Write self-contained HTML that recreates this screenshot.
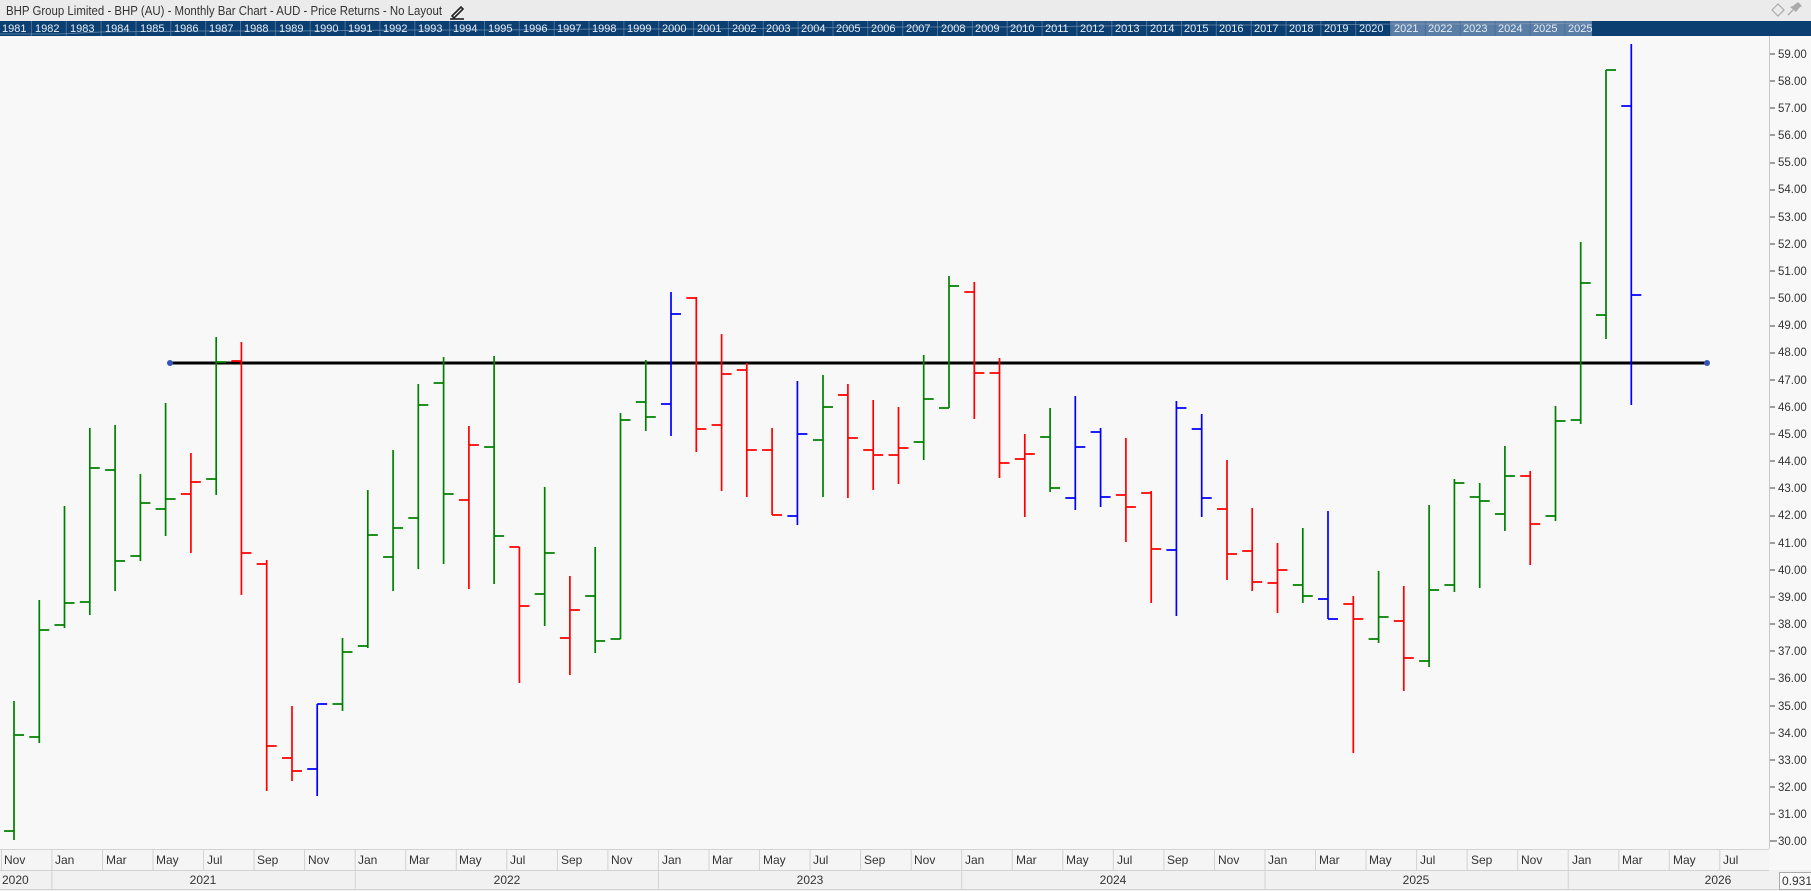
<!DOCTYPE html>
<html><head><meta charset="utf-8"><style>
html,body{margin:0;padding:0;background:#f8f8f8;overflow:hidden}
svg{display:block}
text{font-family:"Liberation Sans",sans-serif}
</style></head><body>
<svg width="1811" height="891" viewBox="0 0 1811 891" xmlns="http://www.w3.org/2000/svg">
<rect x="0" y="0" width="1811" height="891" fill="#f8f8f8"/>
<!-- title bar -->
<rect x="0" y="0" width="1811" height="21" fill="#ebebeb"/>
<text x="6" y="15" font-size="13" fill="#333" textLength="436" lengthAdjust="spacingAndGlyphs">BHP Group Limited - BHP (AU) - Monthly Bar Chart - AUD - Price Returns - No Layout</text>
<g stroke="#222" stroke-width="1.6" fill="none"><path d="M452 16 L461 7 L463 9 L454 18 Z"/><path d="M450 19 H464"/></g>
<path d="M1772 10 L1778 4 L1784 10 L1778 16 Z" fill="none" stroke="#aaa" stroke-width="1.2"/>
<g fill="#aaa"><path d="M1793 6 L1798 2 L1802 6 L1799 8 L1796 12 L1790 7 Z"/><path d="M1793 10 L1788 15" stroke="#aaa" stroke-width="1.3"/></g>
<!-- year strip -->
<rect x="0" y="21" width="1811" height="15" fill="#0b3f72"/>
<rect x="1390" y="21" width="202" height="15" fill="#5a7ea5"/>
<g stroke="#4c6f95" stroke-width="1">
<path d="M31.4 21V36M66.3 21V36M101.1 21V36M136 21V36M170.8 21V36M205.7 21V36M240.5 21V36M275.4 21V36M310.2 21V36M345.1 21V36M379.9 21V36M414.8 21V36M449.6 21V36M484.5 21V36M519.3 21V36M554.2 21V36M589 21V36M623.9 21V36M658.7 21V36M693.6 21V36M728.4 21V36M763.3 21V36M798.1 21V36M833 21V36M867.8 21V36M902.7 21V36M937.5 21V36M972.4 21V36M1007.2 21V36M1042.1 21V36M1076.9 21V36M1111.8 21V36M1146.6 21V36M1181.5 21V36M1216.3 21V36M1251.2 21V36M1286 21V36M1320.9 21V36M1355.7 21V36M1390.6 21V36M1425.4 21V36M1460.3 21V36M1495.1 21V36M1530 21V36M1564.8 21V36"/>
</g>
<polyline points="0,34 60,34 100,32 200,31 300,31 400,30 500,30 600,29 700,29 800,28 900,27 1000,27 1100,26 1200,25 1300,25 1400,24 1500,24 1590,23" fill="none" stroke="#8fa6c0" stroke-width="0.8" opacity="0.7"/>
<g font-size="11" fill="#e6ecf3">
<text x="2" y="32">1981</text><text x="35" y="32">1982</text><text x="70" y="32">1983</text><text x="105" y="32">1984</text><text x="140" y="32">1985</text><text x="174" y="32">1986</text><text x="209" y="32">1987</text><text x="244" y="32">1988</text><text x="279" y="32">1989</text><text x="314" y="32">1990</text><text x="348" y="32">1991</text><text x="383" y="32">1992</text><text x="418" y="32">1993</text><text x="453" y="32">1994</text><text x="488" y="32">1995</text><text x="523" y="32">1996</text><text x="557" y="32">1997</text><text x="592" y="32">1998</text><text x="627" y="32">1999</text><text x="662" y="32">2000</text><text x="697" y="32">2001</text><text x="732" y="32">2002</text><text x="766" y="32">2003</text><text x="801" y="32">2004</text><text x="836" y="32">2005</text><text x="871" y="32">2006</text><text x="906" y="32">2007</text><text x="941" y="32">2008</text><text x="975" y="32">2009</text><text x="1010" y="32">2010</text><text x="1045" y="32">2011</text><text x="1080" y="32">2012</text><text x="1115" y="32">2013</text><text x="1150" y="32">2014</text><text x="1184" y="32">2015</text><text x="1219" y="32">2016</text><text x="1254" y="32">2017</text><text x="1289" y="32">2018</text><text x="1324" y="32">2019</text><text x="1359" y="32">2020</text><text x="1394" y="32">2021</text><text x="1428" y="32">2022</text><text x="1463" y="32">2023</text><text x="1498" y="32">2024</text><text x="1533" y="32">2025</text><text x="1568" y="32">2025</text>
</g>
<!-- price axis -->
<line x1="1769.5" y1="36" x2="1769.5" y2="849" stroke="#c8c8c8" stroke-width="1"/>
<g font-size="11.5" fill="#333">
<text x="1778" y="58">59.00</text><text x="1778" y="85">58.00</text><text x="1778" y="112">57.00</text><text x="1778" y="139">56.00</text><text x="1778" y="166">55.00</text><text x="1778" y="193">54.00</text><text x="1778" y="221">53.00</text><text x="1778" y="248">52.00</text><text x="1778" y="275">51.00</text><text x="1778" y="302">50.00</text><text x="1778" y="329">49.00</text><text x="1778" y="356">48.00</text><text x="1778" y="384">47.00</text><text x="1778" y="411">46.00</text><text x="1778" y="438">45.00</text><text x="1778" y="465">44.00</text><text x="1778" y="492">43.00</text><text x="1778" y="519">42.00</text><text x="1778" y="547">41.00</text><text x="1778" y="574">40.00</text><text x="1778" y="601">39.00</text><text x="1778" y="628">38.00</text><text x="1778" y="655">37.00</text><text x="1778" y="682">36.00</text><text x="1778" y="710">35.00</text><text x="1778" y="737">34.00</text><text x="1778" y="764">33.00</text><text x="1778" y="791">32.00</text><text x="1778" y="818">31.00</text><text x="1778" y="845">30.00</text>
</g>
<g stroke="#444" stroke-width="1">
<path d="M1770 54H1775M1770 81H1775M1770 108H1775M1770 135H1775M1770 163H1775M1770 190H1775M1770 217H1775M1770 244H1775M1770 271H1775M1770 298H1775M1770 326H1775M1770 353H1775M1770 380H1775M1770 407H1775M1770 434H1775M1770 461H1775M1770 488H1775M1770 516H1775M1770 543H1775M1770 570H1775M1770 597H1775M1770 624H1775M1770 651H1775M1770 679H1775M1770 706H1775M1770 733H1775M1770 760H1775M1770 787H1775M1770 814H1775M1770 841H1777"/>
</g>
<!-- horizontal line -->
<line x1="170" y1="363" x2="1707" y2="363" stroke="#000" stroke-width="3"/>
<circle cx="170" cy="363" r="3" fill="#3355bb"/>
<circle cx="1707" cy="363" r="3" fill="#3355bb"/>
<!-- bars -->
<g fill="none" stroke-width="1.7">
<g stroke="#008000">
<path d="M14 701V840M4 831H14M14 735H24"/>
<path d="M39.3 600V743M29.3 737H39.3M39.3 630H49.3"/>
<path d="M64.5 506V628M54.5 625H64.5M64.5 603H74.5"/>
<path d="M89.8 428V615M79.8 602H89.8M89.8 468H99.8"/>
<path d="M115.1 425V591M105.1 470H115.1M115.1 561H125.1"/>
<path d="M140.4 474V561M130.4 556H140.4M140.4 503H150.4"/>
<path d="M165.6 403V536M155.6 509H165.6M165.6 499H175.6"/>
<path d="M216.2 337V495M206.2 479H216.2M216.2 362H226.2"/>
<path d="M342.5 638V711M332.5 704H342.5M342.5 652H352.5"/>
<path d="M367.8 490V648M357.8 646H367.8M367.8 535H377.8"/>
<path d="M393.1 450V591M383.1 557H393.1M393.1 528H403.1"/>
<path d="M418.3 384V569M408.3 518H418.3M418.3 405H428.3"/>
<path d="M443.6 357V564M433.6 383H443.6M443.6 494H453.6"/>
<path d="M494.1 356V584M484.1 447H494.1M494.1 536H504.1"/>
<path d="M544.7 487V626M534.7 594H544.7M544.7 553H554.7"/>
<path d="M595.2 547V653M585.2 596H595.2M595.2 641H605.2"/>
<path d="M620.5 413V639M610.5 639H620.5M620.5 420H630.5"/>
<path d="M645.8 360V431M635.8 402H645.8M645.8 417H655.8"/>
<path d="M823 375V497M813 440H823M823 407H833"/>
<path d="M923.7 355V460M913.7 442H923.7M923.7 399H933.7"/>
<path d="M949 276V408M939 408H949M949 286H959"/>
<path d="M1050.1 408V492M1040.1 437H1050.1M1050.1 488H1060.1"/>
<path d="M1302.8 528V603M1292.8 585H1302.8M1302.8 596H1312.8"/>
<path d="M1378.6 571V643M1368.6 639H1378.6M1378.6 617H1388.6"/>
<path d="M1429.1 505V667M1419.1 661H1429.1M1429.1 590H1439.1"/>
<path d="M1454.4 479V592M1444.4 585H1454.4M1454.4 483H1464.4"/>
<path d="M1479.7 483V588M1469.7 497H1479.7M1479.7 501H1489.7"/>
<path d="M1504.9 446V531M1494.9 514H1504.9M1504.9 476H1514.9"/>
<path d="M1555.5 406V521M1545.5 516H1555.5M1555.5 421H1565.5"/>
<path d="M1580.7 242V424M1570.7 420H1580.7M1580.7 283H1590.7"/>
<path d="M1606 70V339M1596 315H1606M1606 70H1616"/>
</g>
<g stroke="#ff0000">
<path d="M190.9 453V553M180.9 494H190.9M190.9 482H200.9"/>
<path d="M241.4 342V595M231.4 361H241.4M241.4 553H251.4"/>
<path d="M266.7 560V791M256.7 564H266.7M266.7 746H276.7"/>
<path d="M292 706V781M282 758H292M292 771H302"/>
<path d="M468.9 426V589M458.9 500H468.9M468.9 445H478.9"/>
<path d="M519.4 547V683M509.4 547H519.4M519.4 606H529.4"/>
<path d="M569.9 576V675M559.9 638H569.9M569.9 610H579.9"/>
<path d="M696.3 297V452M686.3 298H696.3M696.3 429H706.3"/>
<path d="M721.6 334V491M711.6 425H721.6M721.6 374H731.6"/>
<path d="M746.8 363V497M736.8 370H746.8M746.8 450H756.8"/>
<path d="M772.1 428V515M762.1 450H772.1M772.1 515H782.1"/>
<path d="M847.9 384V498M837.9 395H847.9M847.9 438H857.9"/>
<path d="M873.2 400V490M863.2 450H873.2M873.2 455H883.2"/>
<path d="M898.5 407V484M888.5 455H898.5M898.5 448H908.5"/>
<path d="M974.3 282V419M964.3 292H974.3M974.3 373H984.3"/>
<path d="M999.5 358V478M989.5 373H999.5M999.5 463H1009.5"/>
<path d="M1024.8 434V517M1014.8 459H1024.8M1024.8 454H1034.8"/>
<path d="M1125.9 438V542M1115.9 495H1125.9M1125.9 507H1135.9"/>
<path d="M1151.2 491V603M1141.2 493H1151.2M1151.2 549H1161.2"/>
<path d="M1227 460V580M1217 509H1227M1227 554H1237"/>
<path d="M1252.2 508V591M1242.2 551H1252.2M1252.2 582H1262.2"/>
<path d="M1277.5 543V613M1267.5 583H1277.5M1277.5 570H1287.5"/>
<path d="M1353.3 596V753M1343.3 604H1353.3M1353.3 619H1363.3"/>
<path d="M1403.8 586V691M1393.8 621H1403.8M1403.8 658H1413.8"/>
<path d="M1530.2 471V565M1520.2 476H1530.2M1530.2 524H1540.2"/>
</g>
<g stroke="#0000ff">
<path d="M317.2 704V796M307.2 769H317.2M317.2 704H327.2"/>
<path d="M671 292V436M661 404H671M671 314H681"/>
<path d="M797.4 381V525M787.4 516H797.4M797.4 434H807.4"/>
<path d="M1075.3 396V510M1065.3 498H1075.3M1075.3 447H1085.3"/>
<path d="M1100.6 428V507M1090.6 432H1100.6M1100.6 497H1110.6"/>
<path d="M1176.4 401V616M1166.4 550H1176.4M1176.4 408H1186.4"/>
<path d="M1201.7 414V517M1191.7 429H1201.7M1201.7 498H1211.7"/>
<path d="M1328 511V619M1318 599H1328M1328 619H1338"/>
<path d="M1631.3 44V405M1621.3 106H1631.3M1631.3 295H1641.3"/>
</g>
</g>
<!-- bottom axis -->
<rect x="0" y="849" width="1769" height="21" fill="#f5f5f5"/>
<rect x="0" y="870" width="1811" height="21" fill="#f1f1f1"/>
<g stroke="#d2d2d2" stroke-width="1">
<line x1="0" y1="849.5" x2="1769" y2="849.5"/>
<line x1="0" y1="870.5" x2="1769" y2="870.5"/>
<line x1="0" y1="889.5" x2="1811" y2="889.5"/>
<path d="M1.4 849V870M51.9 849V870M102.5 849V870M153 849V870M203.6 849V870M254.1 849V870M304.6 849V870M355.2 849V870M405.7 849V870M456.3 849V870M506.8 849V870M557.4 849V870M607.9 849V870M658.4 849V870M709 849V870M759.5 849V870M810.1 849V870M860.6 849V870M911.2 849V870M961.7 849V870M1012.2 849V870M1062.8 849V870M1113.3 849V870M1163.9 849V870M1214.4 849V870M1265 849V870M1315.5 849V870M1366 849V870M1416.6 849V870M1467.1 849V870M1517.7 849V870M1568.2 849V870M1618.8 849V870M1669.3 849V870M1719.8 849V870"/>
<path d="M51.9 870V889M355.2 870V889M658.4 870V889M961.7 870V889M1265 870V889M1568.2 870V889"/>
</g>
<g font-size="12" fill="#333">
<text x="4" y="864">Nov</text><text x="55" y="864">Jan</text><text x="106" y="864">Mar</text><text x="156" y="864">May</text><text x="207" y="864">Jul</text><text x="257" y="864">Sep</text><text x="308" y="864">Nov</text>
<text x="358" y="864">Jan</text><text x="409" y="864">Mar</text><text x="459" y="864">May</text><text x="510" y="864">Jul</text><text x="561" y="864">Sep</text><text x="611" y="864">Nov</text>
<text x="662" y="864">Jan</text><text x="712" y="864">Mar</text><text x="763" y="864">May</text><text x="813" y="864">Jul</text><text x="864" y="864">Sep</text><text x="914" y="864">Nov</text>
<text x="965" y="864">Jan</text><text x="1016" y="864">Mar</text><text x="1066" y="864">May</text><text x="1117" y="864">Jul</text><text x="1167" y="864">Sep</text><text x="1218" y="864">Nov</text>
<text x="1268" y="864">Jan</text><text x="1319" y="864">Mar</text><text x="1369" y="864">May</text><text x="1420" y="864">Jul</text><text x="1471" y="864">Sep</text><text x="1521" y="864">Nov</text>
<text x="1572" y="864">Jan</text><text x="1622" y="864">Mar</text><text x="1673" y="864">May</text><text x="1723" y="864">Jul</text>
<text x="2" y="884">2020</text>
<text x="203" y="884" text-anchor="middle">2021</text>
<text x="507" y="884" text-anchor="middle">2022</text>
<text x="810" y="884" text-anchor="middle">2023</text>
<text x="1113" y="884" text-anchor="middle">2024</text>
<text x="1416" y="884" text-anchor="middle">2025</text>
<text x="1718" y="884" text-anchor="middle">2026</text>
</g>
<rect x="1779.5" y="872.5" width="40" height="17" fill="#fafafa" stroke="#aaa"/>
<text x="1782" y="885" font-size="12" fill="#333">0.9316</text>
</svg>
</body></html>
